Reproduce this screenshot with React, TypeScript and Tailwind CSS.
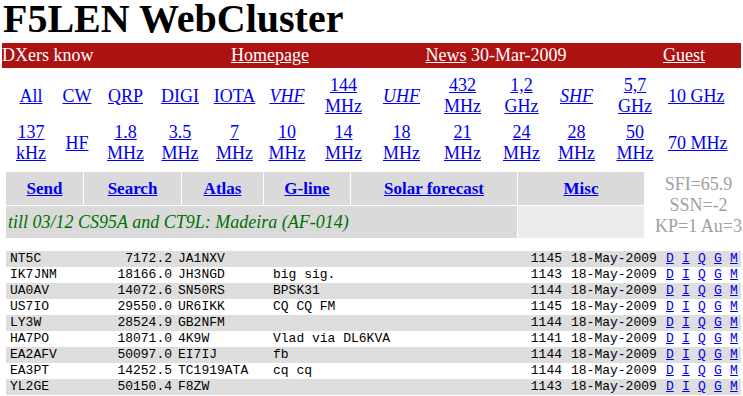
import React from 'react'

type Band = { lines: string[]; italic?: boolean }

const bandsTop: Band[] = [
  { lines: ['All'] },
  { lines: ['CW'] },
  { lines: ['QRP'] },
  { lines: ['DIGI'] },
  { lines: ['IOTA'] },
  { lines: ['VHF'], italic: true },
  { lines: ['144', 'MHz'] },
  { lines: ['UHF'], italic: true },
  { lines: ['432', 'MHz'] },
  { lines: ['1,2', 'GHz'] },
  { lines: ['SHF'], italic: true },
  { lines: ['5,7', 'GHz'] },
  { lines: ['10 GHz'] },
]

const bandsBottom: Band[] = [
  { lines: ['137', 'kHz'] },
  { lines: ['HF'] },
  { lines: ['1.8', 'MHz'] },
  { lines: ['3.5', 'MHz'] },
  { lines: ['7', 'MHz'] },
  { lines: ['10', 'MHz'] },
  { lines: ['14', 'MHz'] },
  { lines: ['18', 'MHz'] },
  { lines: ['21', 'MHz'] },
  { lines: ['24', 'MHz'] },
  { lines: ['28', 'MHz'] },
  { lines: ['50', 'MHz'] },
  { lines: ['70 MHz'] },
]

const spots = [
  ['NT5C', '7172.2', 'JA1NXV', '', '1145'],
  ['IK7JNM', '18166.0', 'JH3NGD', 'big sig.', '1143'],
  ['UA0AV', '14072.6', 'SN50RS', 'BPSK31', '1144'],
  ['US7IO', '29550.0', 'UR6IKK', 'CQ CQ FM', '1145'],
  ['LY3W', '28524.9', 'GB2NFM', '', '1144'],
  ['HA7PO', '18071.0', '4K9W', 'Vlad via DL6KVA', '1141'],
  ['EA2AFV', '50097.0', 'EI7IJ', 'fb', '1144'],
  ['EA3PT', '14252.5', 'TC1919ATA', 'cq cq', '1144'],
  ['YL2GE', '50150.4', 'F8ZW', '', '1143'],
]

function BandCell({ band, last }: { band: Band; last: boolean }) {
  return (
    <div className={`flex h-[42px] items-center ${last ? 'justify-start pl-[3px]' : 'justify-center text-center'}`}>
      <a href="#" className={`text-[#0000ee] underline whitespace-nowrap ${band.italic ? 'italic' : ''}`}>
        {band.lines.map((l, i) => (
          <React.Fragment key={i}>
            {i > 0 && <br />}
            {l}
          </React.Fragment>
        ))}
      </a>
    </div>
  )
}

export default function App() {
  return (
    <div className="w-[743px] h-[396px] overflow-hidden bg-white font-['Liberation_Serif',serif] text-black">
      {/* Title */}
      <h1 className="h-[43px] pl-[3px] text-[40px] leading-[37px] font-bold whitespace-nowrap">F5LEN WebCluster</h1>

      {/* Red bar */}
      <div className="mx-[2px] h-[25px] bg-[#ad1212] text-white text-[18px] leading-[25px] grid grid-cols-[198px_140px_312px_64px_1fr]">
        <div className="pl-[0px]">DXers know</div>
        <div className="text-center"><a href="#" className="underline">Homepage</a></div>
        <div className="text-center"><a href="#" className="underline">News</a> 30-Mar-2009</div>
        <div className="text-center"><a href="#" className="underline">Guest</a></div>
        <div />
      </div>

      {/* Bands */}
      <div className="mt-[7px] pl-[8px] grid grid-cols-[46px_46px_51px_58px_51px_54px_59px_57px_65px_53px_57px_60px_1fr] gap-y-[5px] text-[18px] leading-[21px]">
        {bandsTop.map((b, i) => (
          <BandCell key={'t' + i} band={b} last={i === bandsTop.length - 1} />
        ))}
        {bandsBottom.map((b, i) => (
          <BandCell key={'b' + i} band={b} last={i === bandsBottom.length - 1} />
        ))}
      </div>

      {/* Menu */}
      <div className="mt-[8px] ml-[6px] grid grid-cols-[77px_97px_81px_86px_166px_126px_1fr] grid-rows-[33px_32px] gap-px bg-white">
        {['Send', 'Search', 'Atlas', 'G-line', 'Solar forecast', 'Misc'].map((m) => (
          <div key={m} className="bg-[#dadada] flex items-center justify-center text-[17px] font-bold leading-[21px]">
            <a href="#" className="text-[#0000ee] underline whitespace-nowrap">{m}</a>
          </div>
        ))}
        <div className="row-span-2 -ml-px bg-white flex flex-col items-center justify-center pl-[10px] text-[18px] leading-[21px] text-[#a0a0a0] whitespace-nowrap">
          <div>SFI=65.9</div>
          <div>SSN=-2</div>
          <div>KP=1 Au=3</div>
        </div>
        <div className="col-span-5 bg-[#dadada] flex items-center pl-[2px] text-[18px] leading-[21px] italic text-[#007000] whitespace-nowrap">
          till 03/12 CS95A and CT9L: Madeira (AF-014)
        </div>
        <div className="bg-[#ececec]" />
      </div>

      {/* Spots */}
      <div className="mt-[13px] ml-[6px] w-[735px] font-['Liberation_Mono',monospace] text-[13px] leading-[16px]">
        {spots.map((s, i) => (
          <div key={i} className={`flex h-[16px] whitespace-pre overflow-hidden ${i % 2 === 0 ? 'bg-[#dedede]' : 'bg-white'}`}>
            <div className="w-[104px] shrink-0 pl-[4px]">{s[0]}</div>
            <div className="w-[62px] shrink-0 text-right">{s[1]}</div>
            <div className="w-[101px] shrink-0 pl-[6px]">{s[2]}</div>
            <div className="w-[250px] shrink-0">{s[3]}</div>
            <div className="w-[39px] shrink-0 text-right">{s[4]}</div>
            <div className="w-[104px] shrink-0 pl-[9px]">18-May-2009</div>
            {['D', 'I', 'Q', 'G', 'M'].map((l) => (
              <div key={l} className="w-[16px] shrink-0">
                <a href="#" className="text-[#0000ee] underline">{l}</a>
              </div>
            ))}
          </div>
        ))}
      </div>
    </div>
  )
}
